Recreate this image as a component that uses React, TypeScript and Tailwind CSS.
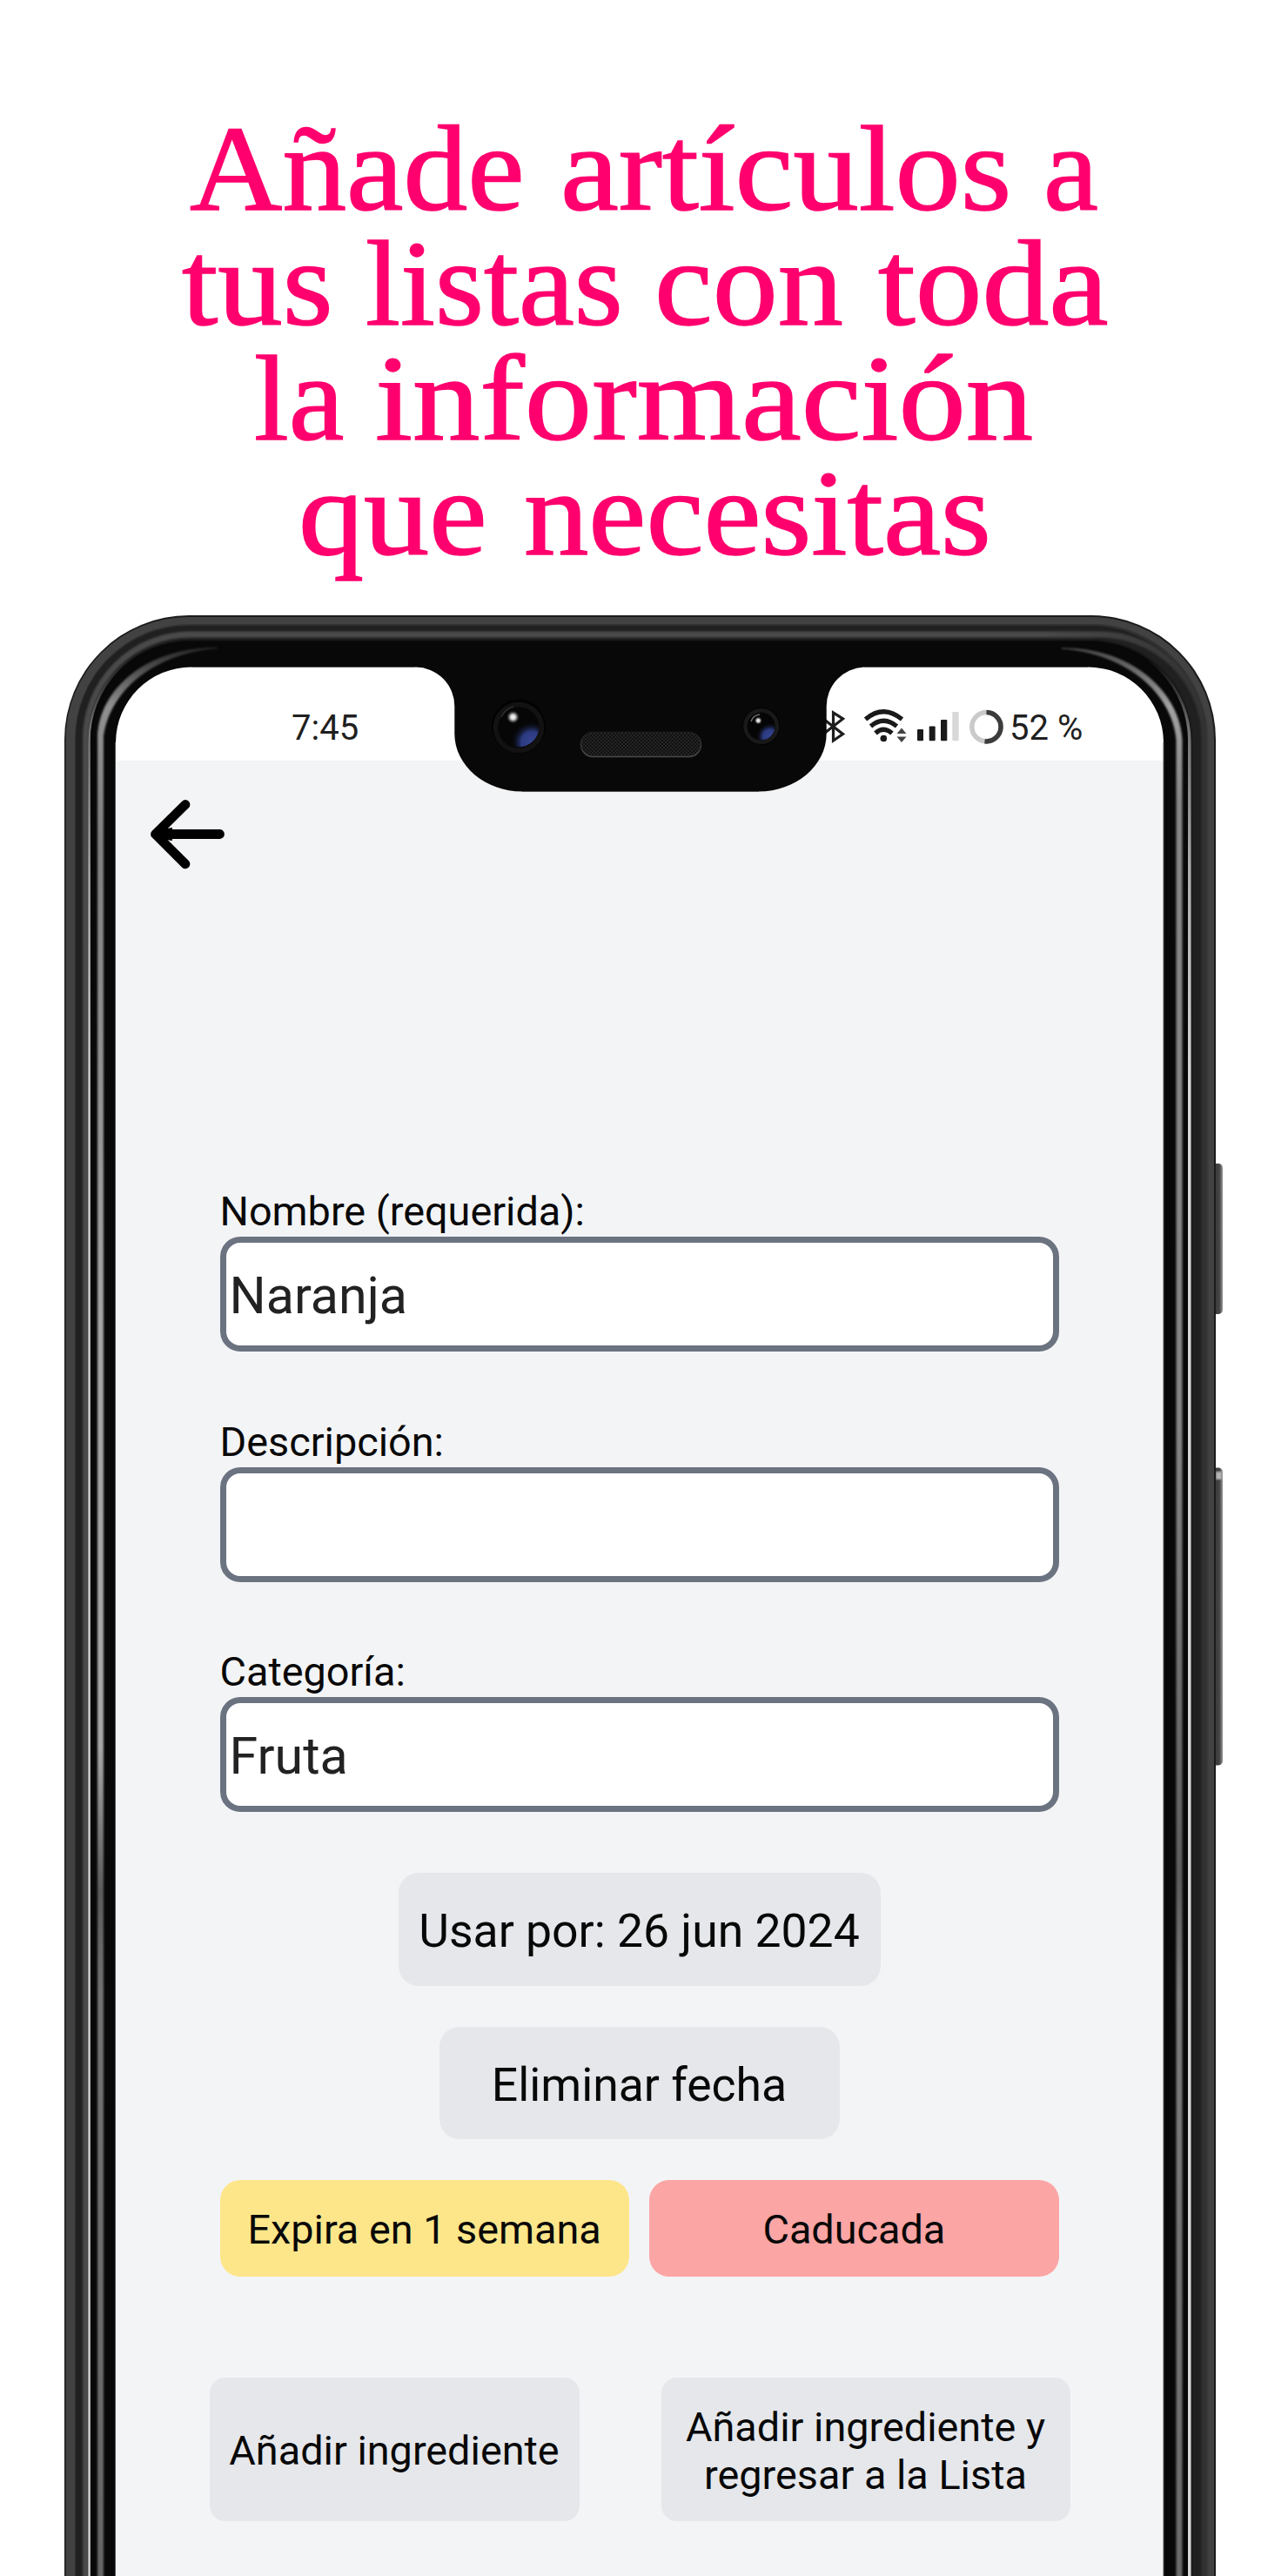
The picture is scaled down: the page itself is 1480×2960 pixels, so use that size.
import React from "react";

type Word = { text: string; box: string; scale: string };

const headline: { indent: string; words: Word[] }[] = [
  {
    indent: "pl-[218px]",
    words: [
      { text: "Añade", box: "w-[426px]", scale: "scale-x-[1.06]" },
      { text: "artículos", box: "w-[555px]", scale: "scale-x-[1.083]" },
      { text: "a", box: "w-[80px]", scale: "scale-x-[1.02]" },
    ],
  },
  {
    indent: "pl-[209px]",
    words: [
      { text: "tus", box: "w-[211px]", scale: "scale-x-[1.07]" },
      { text: "listas", box: "w-[332px]", scale: "scale-x-[1.035]" },
      { text: "con", box: "w-[257px]", scale: "scale-x-[1.08]" },
      { text: "toda", box: "w-[280px]", scale: "scale-x-[1.105]" },
    ],
  },
  {
    indent: "pl-[292px]",
    words: [
      { text: "la", box: "w-[139px]", scale: "scale-x-[1.03]" },
      { text: "información", box: "w-[800px]", scale: "scale-x-[1.113]" },
    ],
  },
  {
    indent: "pl-[343px]",
    words: [
      { text: "que", box: "w-[259px]", scale: "scale-x-[1.08]" },
      { text: "necesitas", box: "w-[560px]", scale: "scale-x-[1.07]" },
    ],
  },
];

function Headline() {
  return (
    <h1 className="h-[707px] pt-[128px] font-['Liberation_Serif',serif] text-[139px] leading-[132px] text-[#ff006e] [-webkit-text-stroke:1.5px_#ff006e]">
      {headline.map((line, i) => (
        <span key={i} className={`flex h-[132px] ${line.indent}`}>
          {line.words.map((w) => (
            <span key={w.text} className={`shrink-0 ${w.box}`}>
              <span className={`inline-block origin-left ${w.scale}`}>{w.text}</span>
            </span>
          ))}
        </span>
      ))}
    </h1>
  );
}

function StatusIcons() {
  return (
    <svg width="214" height="108" viewBox="940 766 214 108" fill="none">
      <path d="M946 826 L968.5 843.5 L957.5 851 V819 L968.5 826 L946 843.5" stroke="#1d1d1d" strokeWidth="3.2" />
      <g stroke="#1a1a1a" strokeWidth="5.2">
        <path d="M994.5 826.5 Q1015 809 1036.500 826.500" />
        <path d="M1000.500 834.500 Q1015 822 1030.500 834.500" />
        <path d="M1006 842.500 Q1015 834 1025 842.500" />
      </g>
      <circle cx="1015.300" cy="848.500" r="3.800" fill="#1a1a1a" />
      <path d="M1030.500 843 L1036 836.500 L1041.500 843 Z M1030.500 846.500 H1041.500 L1036 853 Z" fill="#444" />
      <rect x="1054" y="838" width="7" height="13.300" rx="1" fill="#1a1a1a" />
      <rect x="1067.700" y="834.500" width="7" height="16.800" rx="1" fill="#1a1a1a" />
      <rect x="1081" y="827" width="7.300" height="24.300" rx="1" fill="#1a1a1a" />
      <rect x="1094.300" y="818" width="7.400" height="33.300" rx="1" fill="#d8d8d8" />
      <circle cx="1133.500" cy="835.200" r="16.700" stroke="#cacaca" strokeWidth="5.500" />
      <path d="M1133.500 818.500 A16.700 16.700 0 1 1 1131.500 851.800" stroke="#3c3c3c" strokeWidth="5.500" />
    </svg>
  );
}

function StatusBar() {
  return (
    <div className="flex h-[108px] bg-white text-[40px] leading-[48px] text-[#1f1f1f]">
      <span className="w-[807px] shrink-0 pl-[202px] pt-[47px]">7:45</span>
      <StatusIcons />
      <span className="shrink-0 whitespace-nowrap pl-[6px] pt-[47px]">52 %</span>
    </div>
  );
}

function Field({ label, value }: { label: string; value: string }) {
  return (
    <label className="block h-[264.700px]">
      <span className="block h-[55px] text-[46.800px] leading-[53px] text-[#080808]">{label}</span>
      <span className="flex h-[132px] items-center rounded-[23px] border-[7px] border-[#6b7280] bg-white pl-[4px] pt-[5px] text-[59.200px] text-[#222]">
        {value}
      </span>
    </label>
  );
}

function BackArrow() {
  return (
    <svg className="ml-[36px] mt-[40px]" width="96" height="90" viewBox="169 914 96 90" fill="none">
      <path
        d="M213 924.500 L178.500 958.500 L213 992.800 M180 958.500 H252.500"
        stroke="#000"
        strokeWidth="10.800"
        strokeLinecap="round"
        strokeLinejoin="round"
      />
      <path d="M178 954 L198 951 V966 L178 963 Z" fill="#000" />
    </svg>
  );
}

/* Outline of the body at a given inset, open past the bottom edge. */
function shell(l: number, t: number, r: number, c: number) {
  return `M${l} 2970 V${t + c} A${c} ${c} 0 0 1 ${l + c} ${t} H${r - c} A${c} ${c} 0 0 1 ${r} ${t + c} V2970`;
}

function PhoneBezel() {
  return (
    <svg className="pointer-events-none absolute left-0 top-0" width="1480" height="2960" viewBox="0 0 1480 2960" fill="none">
      <defs>
        <linearGradient id="glossL" gradientUnits="userSpaceOnUse" x1="0" y1="745" x2="0" y2="2960">
          <stop offset="0" stopColor="#2a2a2a" />
          <stop offset="0.030" stopColor="#909090" />
          <stop offset="0.1" stopColor="#808080" />
          <stop offset="0.35" stopColor="#a4a4a4" />
          <stop offset="0.57" stopColor="#a8a8a8" />
          <stop offset="0.645" stopColor="#5c5c5c" />
          <stop offset="0.7" stopColor="#737373" />
          <stop offset="1" stopColor="#666" />
        </linearGradient>
        <linearGradient id="glossR" gradientUnits="userSpaceOnUse" x1="0" y1="745" x2="0" y2="2960">
          <stop offset="0" stopColor="#4a4a4a" />
          <stop offset="0.03" stopColor="#a2a2a2" />
          <stop offset="0.08" stopColor="#868686" />
          <stop offset="0.4" stopColor="#858585" />
          <stop offset="0.64" stopColor="#5e5e5e" />
          <stop offset="0.7" stopColor="#7c7c7c" />
          <stop offset="1" stopColor="#6b6b6b" />
        </linearGradient>
        <linearGradient id="rim" gradientUnits="userSpaceOnUse" x1="0" y1="755" x2="0" y2="1250">
          <stop offset="0" stopColor="#555" stopOpacity="0" />
          <stop offset="0.16" stopColor="#707070" />
          <stop offset="0.5" stopColor="#adadad" />
          <stop offset="1" stopColor="#d6d6d6" />
        </linearGradient>
        <linearGradient id="band" gradientUnits="userSpaceOnUse" x1="1200" y1="0" x2="1385" y2="0">
          <stop offset="0" stopColor="#4a4a4a" />
          <stop offset="1" stopColor="#323232" />
        </linearGradient>
        <linearGradient id="power" x1="0" y1="0" x2="1" y2="0">
          <stop offset="0" stopColor="#303030" />
          <stop offset="0.75" stopColor="#444" />
          <stop offset="1" stopColor="#999" />
        </linearGradient>
        <radialGradient id="lensBlue" cx="0.82" cy="0.88" r="0.52">
          <stop offset="0" stopColor="#35458f" />
          <stop offset="0.5" stopColor="#2c3a80" />
          <stop offset="1" stopColor="#050507" stopOpacity="0" />
        </radialGradient>
        <radialGradient id="glint">
          <stop offset="0" stopColor="#fff" />
          <stop offset="0.4" stopColor="#ccc" />
          <stop offset="1" stopColor="#555" stopOpacity="0" />
        </radialGradient>
        <pattern id="mesh" width="4" height="4" patternUnits="userSpaceOnUse">
          <rect width="4" height="4" fill="#111" />
          <rect width="2" height="2" fill="#242424" />
          <rect x="2" y="2" width="2" height="2" fill="#242424" />
        </pattern>
        <linearGradient id="speakerEdge" x1="0" y1="0" x2="0" y2="1">
          <stop offset="0" stopColor="#1d1d1d" />
          <stop offset="1" stopColor="#494949" />
        </linearGradient>
        <filter id="soft" x="-5%" y="-5%" width="110%" height="110%" colorInterpolationFilters="sRGB">
          <feGaussianBlur stdDeviation="1.3" />
        </filter>
        <mask id="body">
          <rect width="1480" height="2960" fill="#fff" />
          <path
            fill="#000"
            d="M133 2970 V853 A87 87 0 0 1 220 766.500 H477 A45 45 0 0 1 522.300 812 V843 C522.300 880 558 909.500 600 909.500 H872 C914 909.500 949.700 880 949.700 843 V812 A45 45 0 0 1 993 766.500 H1250 A87 87 0 0 1 1337 853 V2970 Z"
          />
        </mask>
      </defs>

      <rect x="1390" y="1337" width="15" height="173" rx="5" fill="url(#power)" />
      <rect x="1390" y="1686.500" width="15" height="342" rx="5" fill="url(#power)" />
      <rect x="1397" y="1691" width="7" height="9" fill="#b5b5b5" filter="url(#soft)" />

      <g mask="url(#body)">
        <path d={shell(74, 707, 1397, 143)} fill="#1b1b1b" />
        <path d={shell(75.5, 709, 1395, 141)} fill="#424242" />
        <path d={shell(86, 717, 1387, 132)} fill="#313131" />
        <path d={shell(87, 719, 1383.5, 130)} fill="#202020" />
        <path d={shell(98.5, 729, 1384, 120)} stroke="url(#band)" strokeWidth="7" filter="url(#soft)" />
        <path d={shell(103, 736, 1369, 116)} fill="#080808" filter="url(#soft)" />
        <path d="M102.600 2970 V851 A116 116 0 0 1 218 735" stroke="url(#rim)" strokeWidth="2.400" />
        <path d="M1252 738 A114 114 0 0 1 1366.600 852 V2970" stroke="url(#rim)" strokeWidth="4" />
        <path d="M105 2970 V851 A113 113 0 0 1 218 738 H1250 A113 113 0 0 1 1364 853 V2970" stroke="#080808" strokeWidth="2" />
        <path d="M112.500 2970 V846 C114 795 165 744 250 744.500 C172 751 125 797 118.500 846 V2970 Z" fill="url(#glossL)" stroke="url(#glossL)" strokeWidth="1" filter="url(#soft)" />
        <path d="M1358 2970 V850 C1355 795 1300 744 1220 745 C1296 751 1347 797 1352 850 V2970 Z" fill="url(#glossR)" stroke="url(#glossR)" strokeWidth="1" filter="url(#soft)" />
      </g>
      <path d="M132.500 2960 V853 M220 766.500 H477 M600 909.500 H872 M993 766.500 H1250 M1337 853 V2960" stroke="#555" strokeWidth="1" />

      <circle cx="596" cy="834.500" r="31" fill="#020202" />
      <circle cx="596" cy="836" r="26.500" fill="#060606" stroke="#131212" strokeWidth="5.500" />
      <circle cx="596" cy="835" r="23.500" fill="url(#lensBlue)" />
      <path d="M576 824 Q580 815 590 812" stroke="#444" strokeWidth="1.500" opacity="0.6" />
      <circle cx="589.500" cy="824" r="7.500" fill="url(#glint)" />

      <circle cx="874.700" cy="834.500" r="21.500" fill="#020202" />
      <circle cx="874.700" cy="834.500" r="18.300" fill="#050505" stroke="#191919" strokeWidth="4.500" />
      <circle cx="874.700" cy="834.500" r="15.800" fill="url(#lensBlue)" />
      <path d="M863 829 Q865 822 873 821" stroke="#888" strokeWidth="1.500" opacity="0.8" />
      <circle cx="871.300" cy="828" r="4.500" fill="url(#glint)" />

      <rect x="667.500" y="841.500" width="138" height="28" rx="14" fill="url(#mesh)" stroke="url(#speakerEdge)" strokeWidth="1.500" />
    </svg>
  );
}

export default function App() {
  return (
    <div className="relative h-[2960px] w-[1480px] overflow-hidden bg-white font-['Roboto',sans-serif]">
      <Headline />
      <div className="mx-[133px] mt-[59px] h-[2194px] w-[1204px] overflow-hidden rounded-t-[87px] bg-gray-100 text-[#080808]">
        <StatusBar />
        <BackArrow />
        <main className="flex flex-col pl-[119.500px] pt-[362px]">
          <form className="h-[786px] w-[964px]">
            <Field label="Nombre (requerida):" value="Naranja" />
            <Field label="Descripción:" value="" />
            <Field label="Categoría:" value="Fruta" />
          </form>
          <div className="flex w-[964px] flex-col items-center gap-[47px] text-[53.500px]">
            <button className="h-[129.500px] w-[554px] rounded-[23px] bg-gray-200 pt-[5px]">Usar por: 26 jun 2024</button>
            <button className="h-[129.500px] w-[460px] rounded-[23px] bg-gray-200 pt-[5px]">Eliminar fecha</button>
          </div>
          <div className="mt-[47px] flex w-[964px] gap-[23.500px] text-[46.800px]">
            <div className="flex h-[110.500px] flex-1 items-center justify-center rounded-[23px] bg-[#fde68a] pt-[4px]">Expira en 1 semana</div>
            <div className="flex h-[110.500px] flex-1 items-center justify-center rounded-[23px] bg-[#fca5a5] pt-[4px]">Caducada</div>
          </div>
          <div className="-ml-[12px] mt-[116px] flex w-[989px] justify-between text-[46.800px] leading-[55px]">
            <button className="h-[165.500px] w-[425px] rounded-[18px] bg-gray-200 pt-[5px]">Añadir ingrediente</button>
            <button className="h-[165.500px] w-[470px] rounded-[18px] bg-gray-200 pt-[5px]">
              Añadir ingrediente y<br />
              regresar a la Lista
            </button>
          </div>
        </main>
      </div>
      <PhoneBezel />
    </div>
  );
}
